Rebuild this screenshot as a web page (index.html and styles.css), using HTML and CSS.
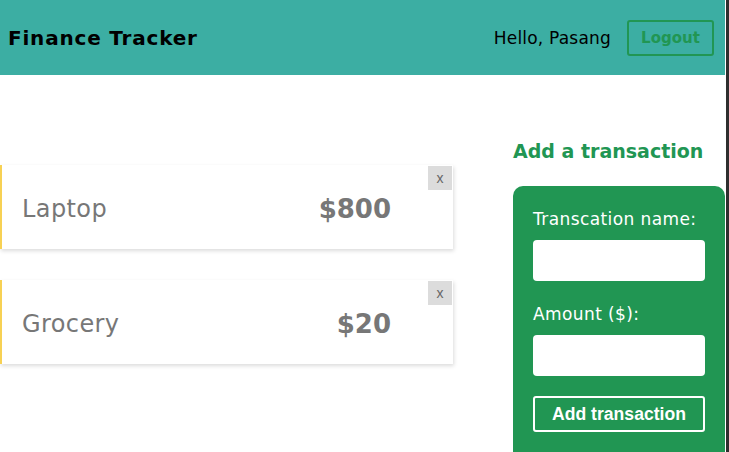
FILE: index.html
```html
<!DOCTYPE html>
<html>
<head>
<meta charset="utf-8">
<link rel="stylesheet" href="styles.css">
</head>
<body>
<div class="page">
  <header class="topbar">
    <h1 class="brand">Finance Tracker</h1>
    <div class="user">
      <span class="hello">Hello, Pasang</span>
      <button class="logout">Logout</button>
    </div>
  </header>
  <main class="content">
    <section class="list">
      <div class="card">
        <span class="name">Laptop</span>
        <span class="amount">$800</span>
        <button class="remove">x</button>
      </div>
      <div class="card">
        <span class="name">Grocery</span>
        <span class="amount">$20</span>
        <button class="remove">x</button>
      </div>
    </section>
    <aside class="side">
      <h2 class="side-title">Add a transaction</h2>
      <form class="form">
        <label class="label">Transcation name:</label>
        <input class="field" type="text">
        <label class="label">Amount ($):</label>
        <input class="field" type="text">
        <button type="button" class="submit">Add transaction</button>
      </form>
    </aside>
  </main>
</div>
<div class="edge"></div>
</body>
</html>
```
FILE: styles.css
```css
html, body {
  margin: 0;
  height: 100%;
  overflow: hidden;
}
body {
  display: flex;
  background: #fff;
  font-family: "DejaVu Sans", "Open Sans", sans-serif;
}
.page {
  width: 725px;
  flex: none;
}
.edge {
  width: 3px;
  margin-left: 1px;
  background: #2e2e2e;
  flex: none;
}
.topbar {
  height: 75px;
  background: #3caea3;
  display: flex;
  align-items: center;
  justify-content: space-between;
  padding: 0 11px 0 8px;
  box-sizing: border-box;
}
.brand {
  margin: 0;
  font-size: 20px;
  font-weight: 700;
  letter-spacing: 0.8px;
  color: #000;
}
.user {
  display: flex;
  align-items: center;
  gap: 16px;
}
.hello {
  font-size: 17px;
  letter-spacing: 0.2px;
  color: #000;
}
.logout {
  width: 87px;
  height: 36px;
  background: transparent;
  border: 2px solid #219653;
  border-radius: 3px;
  color: #219653;
  font-family: "DejaVu Sans", sans-serif;
  font-weight: 700;
  font-size: 15px;
  padding: 0;
}
.content {
  display: flex;
  align-items: flex-start;
}
.list {
  width: 453px;
  padding-top: 90px;
  display: flex;
  flex-direction: column;
  gap: 31px;
}
.card {
  position: relative;
  height: 84px;
  background: #fff;
  border-left: 2px solid #f7d154;
  box-shadow: 1px 2px 4px rgba(0,0,0,0.14);
  display: flex;
  align-items: center;
  padding: 3px 62px 0 20px;
  box-sizing: border-box;
}
.name {
  flex: 1;
  font-size: 24px;
  letter-spacing: 0.4px;
  color: #777;
}
.amount {
  font-size: 26px;
  font-weight: 700;
  color: #777;
}
.remove {
  position: absolute;
  top: 1px;
  right: 1px;
  width: 24px;
  height: 24px;
  border: 0;
  padding: 0;
  background: #dcdcdc;
  color: #666;
  font-family: "Liberation Sans", sans-serif;
  font-size: 14px;
}
.side {
  margin-left: 60px;
  width: 212px;
}
.side-title {
  margin: 66px 0 0 0;
  font-size: 19px;
  font-weight: 700;
  color: #219653;
  line-height: 20px;
}
.form {
  margin-top: 25px;
  background: #219653;
  border-radius: 10px;
  padding: 20px 20px 40px 20px;
  display: flex;
  flex-direction: column;
}
.label {
  color: #fff;
  font-size: 17px;
  letter-spacing: 0.4px;
  line-height: 26px;
  margin-bottom: 8px;
}
.field {
  height: 41px;
  border: 0;
  border-radius: 4px;
  background: #fff;
  margin-bottom: 20px;
  box-sizing: border-box;
}
.submit {
  height: 36px;
  background: transparent;
  border: 2px solid #fff;
  border-radius: 3px;
  color: #fff;
  font-family: "Liberation Sans", Arial, sans-serif;
  font-weight: 700;
  font-size: 17.6px;
  padding: 0;
}
```
